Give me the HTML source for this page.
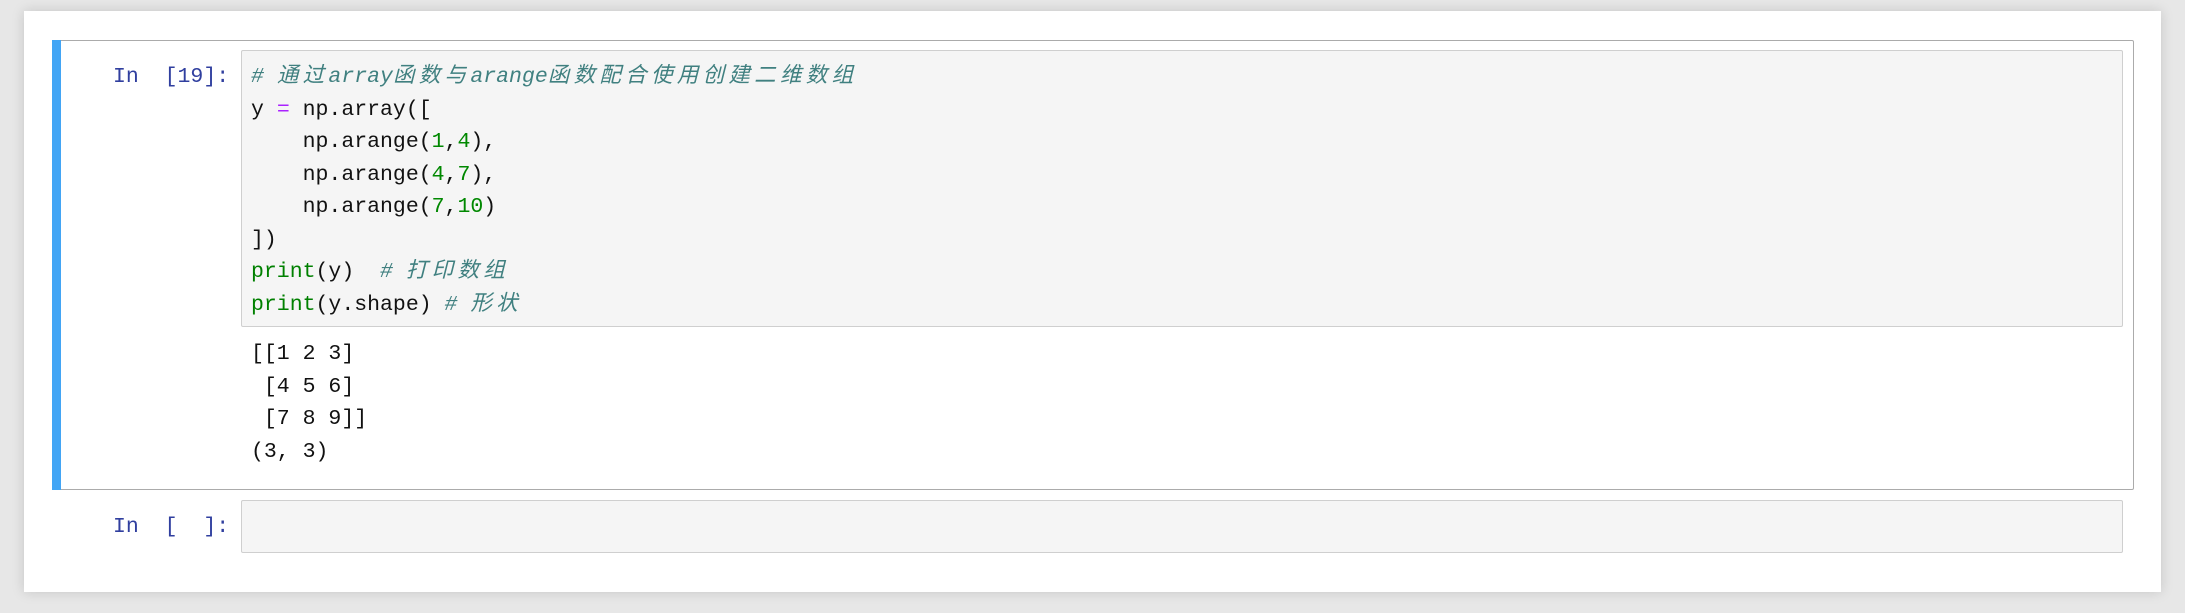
<!DOCTYPE html>
<html><head><meta charset="utf-8"><style>
body{margin:0;width:2185px;height:613px;background:#e7e7e7;position:relative;overflow:hidden;font-family:"Liberation Mono","Noto Sans CJK SC",monospace;}
.panel{position:absolute;left:24px;top:11px;width:2137px;height:581px;background:#fff;box-shadow:0 0 12px rgba(0,0,0,.15);}
.cell{position:absolute;left:52px;top:40px;width:2080px;height:448px;border:1px solid #ababab;border-radius:2px;}
.bar{position:absolute;left:52px;top:40px;width:9px;height:450px;background:#42a5f5;}
.inp{position:absolute;background:#f5f5f5;border:1px solid #cfcfcf;border-radius:2px;}
pre{margin:0;position:absolute;font-family:inherit;font-size:21.5px;line-height:32.5px;color:#111;}
.pr{color:#303f9f;}
.c{color:#408080;font-style:italic}
.k{color:#008000}.n{color:#080}.o{color:#a2f}
.cj{letter-spacing:4.3px}
</style></head><body>
<div class="panel"></div>
<div class="cell"></div>
<div class="bar"></div>
<div class="inp" style="left:241px;top:50px;width:1880px;height:275px"></div>
<pre class="pr" style="left:113px;top:61px">In  [19]:</pre>
<pre style="left:251px;top:61px"><span class="c"># <span class="cj">通过</span>array<span class="cj">函数与</span>arange<span class="cj">函数配合使用创建二维数组</span></span>
y <span class="o">=</span> np.array([
    np.arange(<span class="n">1</span>,<span class="n">4</span>),
    np.arange(<span class="n">4</span>,<span class="n">7</span>),
    np.arange(<span class="n">7</span>,<span class="n">10</span>)
])
<span class="k">print</span>(y)  <span class="c"># <span class="cj">打印数组</span></span>
<span class="k">print</span>(y.shape) <span class="c"># <span class="cj">形状</span></span></pre>
<pre style="left:251px;top:338px">[[1 2 3]
 [4 5 6]
 [7 8 9]]
(3, 3)</pre>
<div class="inp" style="left:241px;top:500px;width:1880px;height:51px"></div>
<pre class="pr" style="left:113px;top:511px">In  [  ]:</pre>
</body></html>
